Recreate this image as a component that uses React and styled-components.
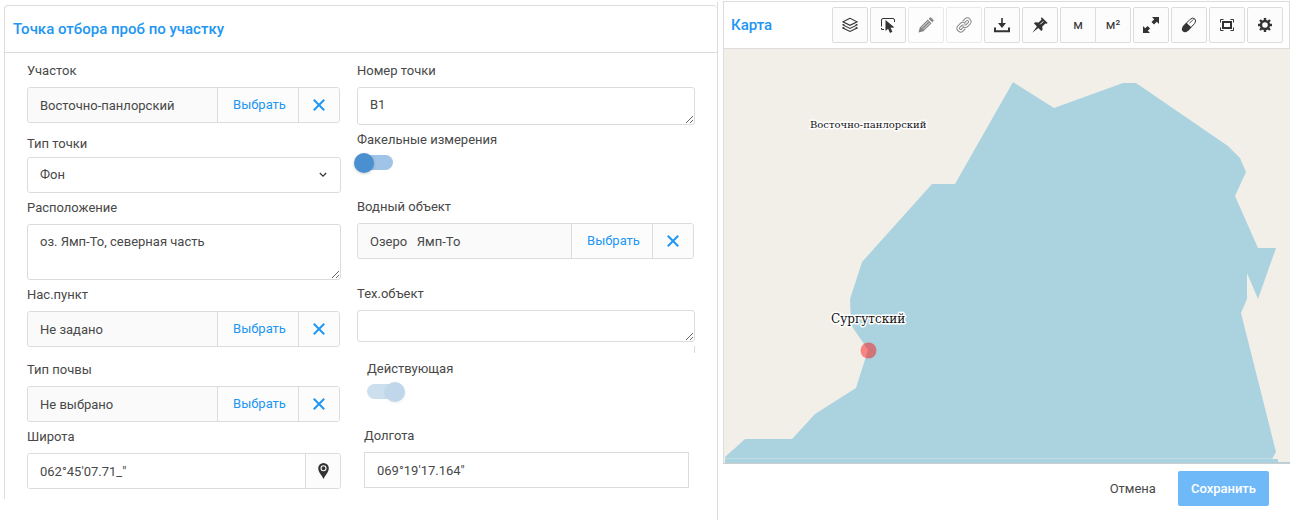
import React, { useState } from "react";
import styled, { createGlobalStyle, css } from "styled-components";

const GlobalStyle = createGlobalStyle`
  *, *::before, *::after { box-sizing: border-box; }
  body {
    margin: 0;
    background: #fff;
    color: #484848;
    font-family: Roboto, "Open Sans", sans-serif;
    font-size: 13px;
    line-height: 16px;
  }
  button, input, select, textarea { font: inherit; color: inherit; margin: 0; }
`;

const line = "#dcdcdc";
const blue = "#2196f3";

const Page = styled.div`
  display: grid;
  grid-template-columns: minmax(0, 718fr) minmax(0, 567fr);
  gap: 5px;
  min-height: 100vh;
`;

const FormPane = styled.main`
  margin-top: 2px;
  padding: 3px 0 0 4px;
  border-right: 1px solid ${line};
`;

const Card = styled.section`
  border: solid ${line};
  border-width: 1px 0 0 1px;
  border-radius: 4px 4px 0 0;
`;

const CardHeader = styled.header`
  display: flex;
  align-items: center;
  height: 47px;
  padding: 0 8px;
  border-bottom: 1px solid ${line};
`;

const Title = styled.h2`
  margin: 0;
  font-size: 15px;
  line-height: 20px;
  font-weight: 500;
  color: ${blue};
`;

const FormGrid = styled.form`
  display: grid;
  grid-template-columns: minmax(0, 314fr) minmax(0, 338fr);
  gap: 16px;
  padding: 10px 22px;
`;

const Column = styled.div`
  display: flex;
  flex-direction: column;
`;

const FieldBox = styled.div`
  display: flex;
  flex-direction: column;
  gap: ${(p) => (p.$tight ? 5 : 8)}px;
  margin-top: ${(p) => p.$space || 0}px;
  padding: 0 ${(p) => (p.$inset ? 6 : 0)}px 0 ${(p) => p.$indent || 0}px;
`;

const Label = styled.label`
  display: block;
`;

const frame = css`
  border: 1px solid ${line};
  border-radius: 3px;
  background: #fff;
  outline: none;
`;

const TextInput = styled.input`
  ${frame}
  width: 100%;
  height: 36px;
  padding: 0 12px;
  border-radius: ${(p) => (p.$square ? 0 : 3)}px;
`;

const TextArea = styled.textarea`
  ${frame}
  display: block;
  width: 100%;
  height: ${(p) => p.$height}px;
  padding: 9px 12px;
  overflow: hidden;
  resize: vertical;
`;

const SelectWrap = styled.div`
  display: grid;
  align-items: center;
  > * { grid-area: 1 / 1; }
  > svg { justify-self: end; margin-right: 14px; pointer-events: none; }
`;

const Select = styled.select`
  ${frame}
  appearance: none;
  width: 100%;
  height: 36px;
  padding: 0 12px;
`;

const Group = styled.div`
  ${frame}
  display: flex;
  height: 36px;
  margin-right: ${(p) => (p.$picker ? 1 : 0)}px;
  overflow: hidden;
`;

const GroupInput = styled.input`
  flex: 1;
  min-width: 0;
  border: 0;
  padding: 2px 12px 0;
  background: ${(p) => (p.readOnly ? "#fafafa" : "#fff")};
  outline: none;
`;

const GroupButton = styled.button`
  display: flex;
  align-items: center;
  justify-content: center;
  width: ${(p) => p.$width}px;
  padding: 0 0 0 ${(p) => (p.$text ? 3 : 0)}px;
  border: 0;
  border-left: 1px solid ${line};
  background: #fcfcfc;
  color: ${(p) => (p.$dark ? "#333" : blue)};
  cursor: pointer;
`;

const Switch = styled.input`
  appearance: none;
  display: flex;
  align-items: center;
  width: 36px;
  height: 15px;
  border-radius: 8px;
  background: ${(p) => (p.disabled ? "#cbdfef" : "#9fc4e7")};

  input&& { margin: 2px 0 3px; }
  &::before {
    content: "";
    flex: none;
    width: 20px;
    height: 20px;
    margin: 0 -2px 0 -3px;
    border-radius: 50%;
    background: ${(p) => (p.disabled ? "#c0d6ea" : "#4a90d0")};
    box-shadow: 0 1px 3px rgba(0, 0, 0, ${(p) => (p.disabled ? 0.08 : 0.2)});
  }
  &:checked { justify-content: flex-end; }
`;

const Tick = styled.span`
  align-self: flex-end;
  width: 1px;
  height: 7px;
  margin-top: 4px;
  background: ${line};
`;

const MapPane = styled.aside`
  display: flex;
  flex-direction: column;
  margin-top: 1px;
`;

const MapHeader = styled.header`
  display: flex;
  align-items: center;
  justify-content: space-between;
  height: 48px;
  padding: 0 6px 0 7px;
  border: 1px solid ${line};
`;

const Toolbar = styled.div`
  display: flex;
  gap: 2px;
`;

const ToolGroup = styled.div`
  display: flex;
  button { border-radius: 0 2px 2px 0; }
  button:first-child { border-right: 0; border-radius: 2px 0 0 2px; width: 35px; }
`;

const Tool = styled.button`
  display: flex;
  align-items: center;
  justify-content: center;
  width: 36px;
  height: 36px;
  padding: 0;
  border: 1px solid ${line};
  border-radius: 2px;
  background: #fcfcfc;
  color: #333;
  opacity: ${(p) => (p.disabled ? 0.6 : 1)};
`;

const MapView = styled.div`
  display: flex;
  flex: 1;
  min-height: 200px;
  border-left: 1px solid ${line};
  border-bottom: 1px solid #ccc;
  background: #f2efe9;
  > svg { flex: 1; width: 100%; min-width: 0; }
`;

const MapText = styled.text`
  font-family: "DejaVu Serif", serif;
  font-size: ${(p) => p.$size}px;
  fill: #111;
  stroke: #fff;
  stroke-width: 3px;
  stroke-linejoin: round;
  paint-order: stroke;
`;

const Footer = styled.footer`
  display: flex;
  align-items: center;
  justify-content: flex-end;
  gap: 9px;
  padding: 7px 21px 14px;
`;

const FooterButton = styled.button`
  height: 35px;
  padding: 0 13px;
  border: 0;
  border-radius: 2px;
  background: ${(p) => (p.$primary ? "#70b9f8" : "transparent")};
  color: ${(p) => (p.$primary ? "#fff" : "#484848")};
  font-weight: ${(p) => (p.$primary ? 500 : 400)};
`;

const Svg = ({ children, size = 16 }) => (
  <svg width={size} height={size} viewBox="0 0 16 16" fill="none" stroke="currentColor" aria-hidden="true">
    {children}
  </svg>
);

const icons = {
  layers: (
    <Svg>
      <path d="M8 1.3.9 4.8 8 8.300l7.100-3.500zM2.300 7.200l-1.400.7L8 11.400l7.100-3.500-1.400-.7M2.300 10.300l-1.400.7L8 14.500l7.100-3.500-1.400-.7" strokeWidth="1.100" />
    </Svg>
  ),
  pointer: (
    <Svg>
      <path d="M4 12.500H1.500V11M1.500 9.500V3q0-1.500 1.500-1.500h10q1.500 0 1.500 1.500v2" strokeWidth="1" />
      <path d="M5.500 3v11l2.600-2.300 1.900 4.200 2.400-1.100-1.900-4 4-.2z" fill="currentColor" stroke="none" />
    </Svg>
  ),
  pencil: (
    <Svg>
      <path d="m.5 15.500 1.300-5 8-8 3.700 3.700-8 8zM10.700 1.700l1-1q.8-.7 1.600 0l2 2q.7.800 0 1.600l-1 1z" fill="currentColor" stroke="none" />
      <path d="m3.500 10.900 6.800-6.800M5.100 12.500l6.800-6.800" stroke="#fcfcfc" strokeWidth=".8" />
    </Svg>
  ),
  link: (
    <Svg>
      <path d="M7.500 5 9.800 2.700a2.500 2.500 0 0 1 3.500 3.500L11 8.500a2.500 2.500 0 0 1-3.500 0M8.500 11l-2.300 2.300a2.500 2.500 0 0 1-3.500-3.500L5 7.500a2.500 2.500 0 0 1 3.500 0" strokeWidth="3.400" />
      <path d="M7.500 5 9.800 2.700a2.500 2.500 0 0 1 3.500 3.500L11 8.500a2.500 2.500 0 0 1-3.500 0M8.500 11l-2.300 2.300a2.500 2.500 0 0 1-3.500-3.500L5 7.500a2.500 2.500 0 0 1 3.500 0" stroke="#fcfcfc" strokeWidth="1.500" />
    </Svg>
  ),
  download: (
    <Svg>
      <path d="M1 10.500v3.700h14v-3.700" strokeWidth="2" />
      <path d="M7.200 1h1.600v5H12L8 11 4 6h3.200z" fill="currentColor" stroke="none" />
    </Svg>
  ),
  pin: (
    <Svg>
      <path d="M9.700.300 15.700 6l-1.200.8-1-.4-3.200 3.200.2 3.200-1.200 1.200-3-3L.3 15.700 4.900 9.400 1.900 6.300 3.300 5.200l3.300.4 3-3-.7-1.300z" fill="currentColor" stroke="none" />
      <path d="m8.300 7.300 3-3" stroke="#fcfcfc" strokeWidth="1" />
    </Svg>
  ),
  expand: (
    <Svg>
      <path d="M9 0h7v7l-2.200-2.200-2.800 2.700L8.500 5l2.700-2.800zM0 9v7h7l-2.200-2.200 2.300-2.300-2.600-2.600-2.300 2.300z" fill="currentColor" stroke="none" />
    </Svg>
  ),
  eraser: (
    <Svg>
      <path d="m2.200 9.300 7-7q2.700-2.300 4.600-.4 1.800 2-.2 4.600l-7 7.400z" strokeWidth="1" />
      <path d="m5.400 5.800 4.900 4.500-3.500 3.700Q4 16.400 1.700 14.200-.2 11.700 2 9.400z" fill="currentColor" stroke="none" />
      <path d="m8.500 6.300 4-4" strokeWidth=".8" />
    </Svg>
  ),
  fit: (
    <Svg>
      <path d="M4 5h8v6H4z" strokeWidth="2" />
      <path d="M1.500 5.500v-3h3M11.500 2.500h3v3M14.500 10.500v3h-3M4.500 13.500h-3v-3" />
    </Svg>
  ),
  gear: (
    <Svg>
      <circle cx="8" cy="8" r="4" strokeWidth="2.400" />
      <path d="M8 1v3M8 12v3M1 8h3M12 8h3M3 3l2 2M11 11l2 2M3 13l2-2M11 5l2-2" strokeWidth="2.400" />
    </Svg>
  ),
};

const Cross = () => (
  <svg width="12" height="12" viewBox="0 0 12 12" stroke="currentColor" strokeWidth="2" aria-hidden="true">
    <path d="m.8.8 10.400 10.400M11.200.8.8 11.200" />
  </svg>
);

const Marker = () => (
  <svg width="11" height="16" viewBox="0 0 11 16" aria-hidden="true">
    <path d="M5.500 0A5.300 5.300 0 0 0 .2 5.300C.2 9 3.500 12 5.500 16c2-4 5.300-7 5.300-10.700A5.300 5.300 0 0 0 5.500 0z" fill="currentColor" />
    <circle cx="5.500" cy="5.300" r="2.500" fill="none" stroke="#fff" strokeWidth="1.100" />
  </svg>
);

function Field({ id, label, children, ...box }) {
  return (
    <FieldBox {...box}>
      <Label htmlFor={id}>{label}</Label>
      {children}
    </FieldBox>
  );
}

function Picker({ id, value }) {
  const [text, setText] = useState(value);
  return (
    <Group $picker>
      <GroupInput id={id} readOnly value={text} />
      <GroupButton type="button" $width={81} $text>Выбрать</GroupButton>
      <GroupButton type="button" $width={41} aria-label="Очистить" onClick={() => setText("")}>
        <Cross />
      </GroupButton>
    </Group>
  );
}

function ToolButton({ icon, label, ...rest }) {
  return (
    <Tool type="button" aria-label={label} {...rest}>
      {icons[icon]}
    </Tool>
  );
}

const WaterMap = () => (
  <svg viewBox="0 0 566 414" preserveAspectRatio="xMidYMid slice" role="img" aria-label="Карта участка">
    <rect width="566" height="414" fill="#f2efe9" />
    <path
      fill="#abd3df"
      d="M289 33 330 59 399 34H412L504 97 516 109 522 123 511 147 534 199H552L534 250 523 224V250L517 264 552 403 548 410H554V413H566V414H1V408L21 390H68L91 365 132 339 144 301 127 276 126 250 138 213 208 135H231Z"
    />
    <path d="M1 409.500H548" stroke="#fff" strokeOpacity=".25" />
    <circle cx="144.500" cy="301.500" r="8" fill="#f00" fillOpacity=".45" />
    <MapText x="86" y="79" $size={10}>Восточно-панлорский</MapText>
    <MapText x="107" y="274" $size={12}>Сургутский</MapText>
  </svg>
);

export default function App() {
  return (
    <>
      <GlobalStyle />
      <Page>
        <FormPane>
          <Card>
            <CardHeader>
              <Title>Точка отбора проб по участку</Title>
            </CardHeader>
            <FormGrid>
              <Column>
                <Field id="area" label="Участок">
                  <Picker id="area" value="Восточно-панлорский" />
                </Field>
                <Field id="kind" label="Тип точки" $space={13} $tight>
                  <SelectWrap>
                    <Select id="kind" defaultValue="Фон">
                      <option>Фон</option>
                    </Select>
                    <svg width="8" height="6" viewBox="0 0 8 6" fill="none" stroke="#333" strokeWidth="1.200" aria-hidden="true">
                      <path d="m.8 1 3.200 3.200L7.200 1" />
                    </svg>
                  </SelectWrap>
                </Field>
                <Field id="place" label="Расположение" $space={7}>
                  <TextArea id="place" $height={56} defaultValue="оз. Ямп-То, северная часть" />
                </Field>
                <Field id="town" label="Нас.пункт" $space={7}>
                  <Picker id="town" value="Не задано" />
                </Field>
                <Field id="soil" label="Тип почвы" $space={15}>
                  <Picker id="soil" value="Не выбрано" />
                </Field>
                <Field id="lat" label="Широта" $space={7}>
                  <Group>
                    <GroupInput id="lat" defaultValue={"062°45'07.71_\""} />
                    <GroupButton type="button" $width={35} $dark aria-label="Указать на карте">
                      <Marker />
                    </GroupButton>
                  </Group>
                </Field>
              </Column>
              <Column>
                <Field id="number" label="Номер точки">
                  <TextArea id="number" $height={38} defaultValue="В1" />
                </Field>
                <Field id="flare" label="Факельные измерения" $space={7} $tight>
                  <Switch type="checkbox" role="switch" id="flare" />
                </Field>
                <Field id="water" label="Водный объект" $space={26}>
                  <Picker id="water" value={"Озеро   Ямп-То"} />
                </Field>
                <Field id="tech" label="Тех.объект" $space={27}>
                  <TextArea id="tech" $height={32} />
                </Field>
                <Tick />
                <Field id="active" label="Действующая" $space={8} $indent={10} $tight>
                  <Switch type="checkbox" role="switch" id="active" defaultChecked disabled />
                </Field>
                <Field id="lon" label="Долгота" $space={26} $indent={7} $inset>
                  <TextInput id="lon" $square defaultValue={"069°19'17.164\""} />
                </Field>
              </Column>
            </FormGrid>
          </Card>
        </FormPane>
        <MapPane>
          <MapHeader>
            <Title>Карта</Title>
            <Toolbar>
              <ToolButton icon="layers" label="Слои" />
              <ToolButton icon="pointer" label="Выбор" />
              <ToolButton icon="pencil" label="Редактировать" disabled />
              <ToolButton icon="link" label="Связать" disabled />
              <ToolButton icon="download" label="Загрузить" />
              <ToolButton icon="pin" label="Закрепить" />
              <ToolGroup>
                <Tool type="button">м</Tool>
                <Tool type="button">м²</Tool>
              </ToolGroup>
              <ToolButton icon="expand" label="Развернуть" />
              <ToolButton icon="eraser" label="Стереть" />
              <ToolButton icon="fit" label="Показать всё" />
              <ToolButton icon="gear" label="Настройки" />
            </Toolbar>
          </MapHeader>
          <MapView>
            <WaterMap />
          </MapView>
          <Footer>
            <FooterButton type="button">Отмена</FooterButton>
            <FooterButton type="submit" $primary>Сохранить</FooterButton>
          </Footer>
        </MapPane>
      </Page>
    </>
  );
}
